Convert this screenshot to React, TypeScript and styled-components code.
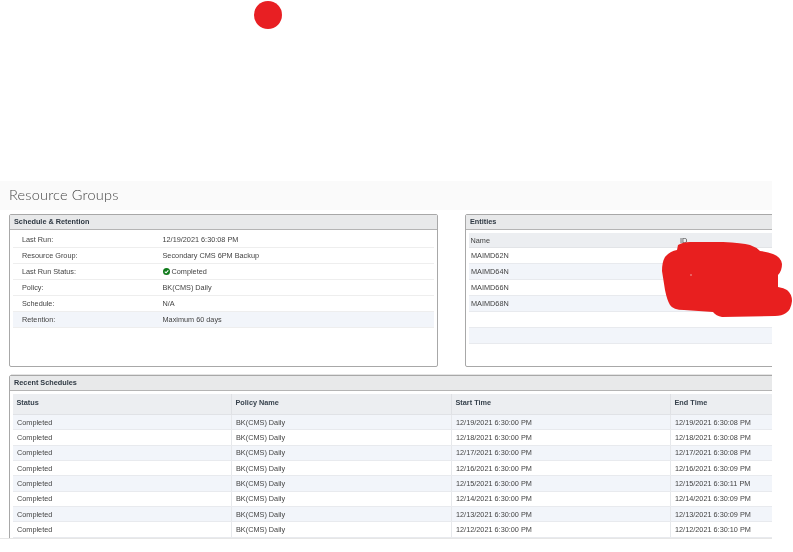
import React from "react";
import styled, { createGlobalStyle } from "styled-components";

const Global = createGlobalStyle`
  html, body { margin: 0; padding: 0; background: #fff; }
  body { font-family: "Liberation Sans", Arial, sans-serif; }
`;

const Screen = styled.div`
  position: relative;
  width: 793px;
  height: 552px;
  overflow: hidden;
  background: #fff;
  display: flow-root;
`;

const Sheet = styled.main`
  width: 772px;
  height: 357px;
  margin-top: 181px;
  overflow: hidden;
  border-bottom: 1px solid #e6e6e6;
  filter: blur(0.3px);
`;

const TitleBand = styled.header`
  box-sizing: border-box;
  height: 29px;
  background: #fafafa;
  padding: 0 0 2px 9px;
  display: flex;
  align-items: center;
`;

const Title = styled.h1`
  margin: 0;
  font-family: Lato, "Open Sans", sans-serif;
  font-weight: 300;
  font-size: 14.5px;
  letter-spacing: 0.2px;
  color: #444;
`;

const TopRow = styled.div`
  display: flex;
  gap: 27px;
  padding: 4px 0 7px 9px;
  width: 900px;
`;

const Divider = styled.hr`
  margin: 0 0 0 11px;
  border: 0;
  height: 1px;
  background: #e4e4e4;
`;

const Panel = styled.section<{ $width: number; $height: number; $inset?: number }>`
  box-sizing: border-box;
  width: ${(p) => p.$width}px;
  height: ${(p) => p.$height}px;
  margin-left: ${(p) => p.$inset ?? 0}px;
  border: 1px solid #a8a8a8;
  border-radius: 2px;
  background: #fff;
  flex: none;
`;

const PanelTitle = styled.h2`
  margin: 0;
  height: 15px;
  box-sizing: border-box;
  background: #e8e9ea;
  border-bottom: 1px solid #b4b4b4;
  padding-left: 4px;
  font-size: 7.3px;
  line-height: 14px;
  font-weight: 700;
  color: #2f3943;
`;

const InfoList = styled.div`
  padding: 2px 3px 0 3px;
`;

const InfoRow = styled.div<{ $active?: boolean }>`
  display: grid;
  grid-template-columns: 140.5px 1fr;
  height: 16px;
  box-sizing: border-box;
  border-bottom: 1px solid #eeeeee;
  padding-left: 9px;
  align-items: center;
  background: ${(p) => (p.$active ? "#f2f5fa" : "#fff")};
  font-size: 7.3px;
  color: #444;
`;

const Status = styled.span`
  display: flex;
  align-items: center;
  gap: 2px;
`;

const EntityTable = styled.div`
  margin: 3px 0 0 3px;
  width: 500px;
`;

const EntityHead = styled.div`
  display: grid;
  grid-template-columns: 209.5px 1fr;
  height: 15px;
  background: #eceef1;
  border-bottom: 1px solid #e2e4e7;
  box-sizing: border-box;
  align-items: center;
  padding-left: 1.5px;
  font-size: 7.3px;
  color: #444;
`;

const EntityRow = styled.div<{ $alt?: boolean }>`
  height: 16px;
  box-sizing: border-box;
  border-bottom: 1px solid #e8eaee;
  background: ${(p) => (p.$alt ? "#f2f5fa" : "#fff")};
  padding-left: 2px;
  display: flex;
  align-items: center;
  font-size: 7.3px;
  color: #444;
`;

const ScheduleTable = styled.div`
  margin: 3px 0 0 3px;
  width: 880px;
`;

const columns = "219px 220px 219px 1fr";

const ScheduleHead = styled.div`
  display: grid;
  grid-template-columns: ${columns};
  height: 21px;
  box-sizing: border-box;
  background: #eceef1;
  border-bottom: 1px solid #e0e2e6;
`;

const HeadCell = styled.div`
  border-right: 1px solid #dfe1e5;
  padding: 4px 0 0 3.5px;
  font-size: 7.3px;
  line-height: 9px;
  font-weight: 700;
  color: #38434e;
`;

const ScheduleRow = styled.div<{ $alt?: boolean }>`
  display: grid;
  grid-template-columns: ${columns};
  height: 15.33px;
  box-sizing: border-box;
  border-bottom: 1px solid #e8eaee;
  background: ${(p) => (p.$alt ? "#f2f5fa" : "#fff")};
`;

const Cell = styled.div`
  border-right: 1px solid #e6e8eb;
  padding-left: 4px;
  display: flex;
  align-items: center;
  font-size: 7.3px;
  color: #444;
`;

const Annotation = styled.svg`
  position: absolute;
  left: 0;
  top: 0;
  pointer-events: none;
`;

const info = [
  ["Last Run:", "12/19/2021 6:30:08 PM"],
  ["Resource Group:", "Secondary CMS 6PM Backup"],
  ["Last Run Status:", "Completed"],
  ["Policy:", "BK(CMS) Daily"],
  ["Schedule:", "N/A"],
  ["Retention:", "Maximum 60 days"],
];

const entities = ["MAIMD62N", "MAIMD64N", "MAIMD66N", "MAIMD68N", "", ""];

const schedules = [
  ["12/19/2021 6:30:00 PM", "12/19/2021 6:30:08 PM"],
  ["12/18/2021 6:30:00 PM", "12/18/2021 6:30:08 PM"],
  ["12/17/2021 6:30:00 PM", "12/17/2021 6:30:08 PM"],
  ["12/16/2021 6:30:00 PM", "12/16/2021 6:30:09 PM"],
  ["12/15/2021 6:30:00 PM", "12/15/2021 6:30:11 PM"],
  ["12/14/2021 6:30:00 PM", "12/14/2021 6:30:09 PM"],
  ["12/13/2021 6:30:00 PM", "12/13/2021 6:30:09 PM"],
  ["12/12/2021 6:30:00 PM", "12/12/2021 6:30:10 PM"],
];

const CheckIcon = () => (
  <svg width="7" height="7" viewBox="0 0 8 8" aria-hidden="true">
    <circle cx="4" cy="4" r="4" fill="#0f7a1a" />
    <path d="M2 4.1 L3.5 5.5 L6.1 2.6" fill="none" stroke="#fff" strokeWidth="1.3" />
  </svg>
);

export default function App() {
  return (
    <Screen>
      <Global />
      <Sheet>
        <TitleBand>
          <Title>Resource Groups</Title>
        </TitleBand>
        <TopRow>
          <Panel $width={429} $height={153}>
            <PanelTitle>Schedule &amp; Retention</PanelTitle>
            <InfoList>
              {info.map(([label, value]) => (
                <InfoRow key={label} $active={label === "Retention:"}>
                  <span>{label}</span>
                  {label === "Last Run Status:" ? (
                    <Status>
                      <CheckIcon />
                      {value}
                    </Status>
                  ) : (
                    <span>{value}</span>
                  )}
                </InfoRow>
              ))}
            </InfoList>
          </Panel>
          <Panel $width={420} $height={153}>
            <PanelTitle>Entities</PanelTitle>
            <EntityTable>
              <EntityHead>
                <span>Name</span>
                <span>ID</span>
              </EntityHead>
              {entities.map((name, i) => (
                <EntityRow key={i} $alt={i % 2 === 1}>
                  {name}
                </EntityRow>
              ))}
            </EntityTable>
          </Panel>
        </TopRow>
        <Divider />
        <Panel $width={900} $height={200} $inset={9}>
          <PanelTitle>Recent Schedules</PanelTitle>
          <ScheduleTable>
            <ScheduleHead>
              <HeadCell>Status</HeadCell>
              <HeadCell>Policy Name</HeadCell>
              <HeadCell>Start Time</HeadCell>
              <HeadCell>End Time</HeadCell>
            </ScheduleHead>
            {schedules.map(([start, end], i) => (
              <ScheduleRow key={start} $alt={i % 2 === 0}>
                <Cell>Completed</Cell>
                <Cell>BK(CMS) Daily</Cell>
                <Cell>{start}</Cell>
                <Cell>{end}</Cell>
              </ScheduleRow>
            ))}
          </ScheduleTable>
        </Panel>
      </Sheet>
      <Annotation width="793" height="552" viewBox="0 0 793 552" aria-hidden="true">
        <circle cx="268" cy="15" r="14" fill="#e81f23" />
        <path
          d="M678 245 Q683 242 690 242 L723 242 Q742 243 750 245 Q756 247 760 251 Q768 252 773 254 Q781 257 782 264 Q782 271 778 275 L778 287 Q784 288 787 290 Q792 294 792 301 Q791 310 786 313 Q782 316 775 316 L722 317 Q716 316 713 312 L684 310 Q673 310 670 305 Q667 300 665 290 L662 271 Q662 262 665 257 Q670 251 677 250 Z"
          fill="#e81f1f"
        />
        <circle cx="691" cy="275" r="0.8" fill="#f0b0b0" />
      </Annotation>
    </Screen>
  );
}
